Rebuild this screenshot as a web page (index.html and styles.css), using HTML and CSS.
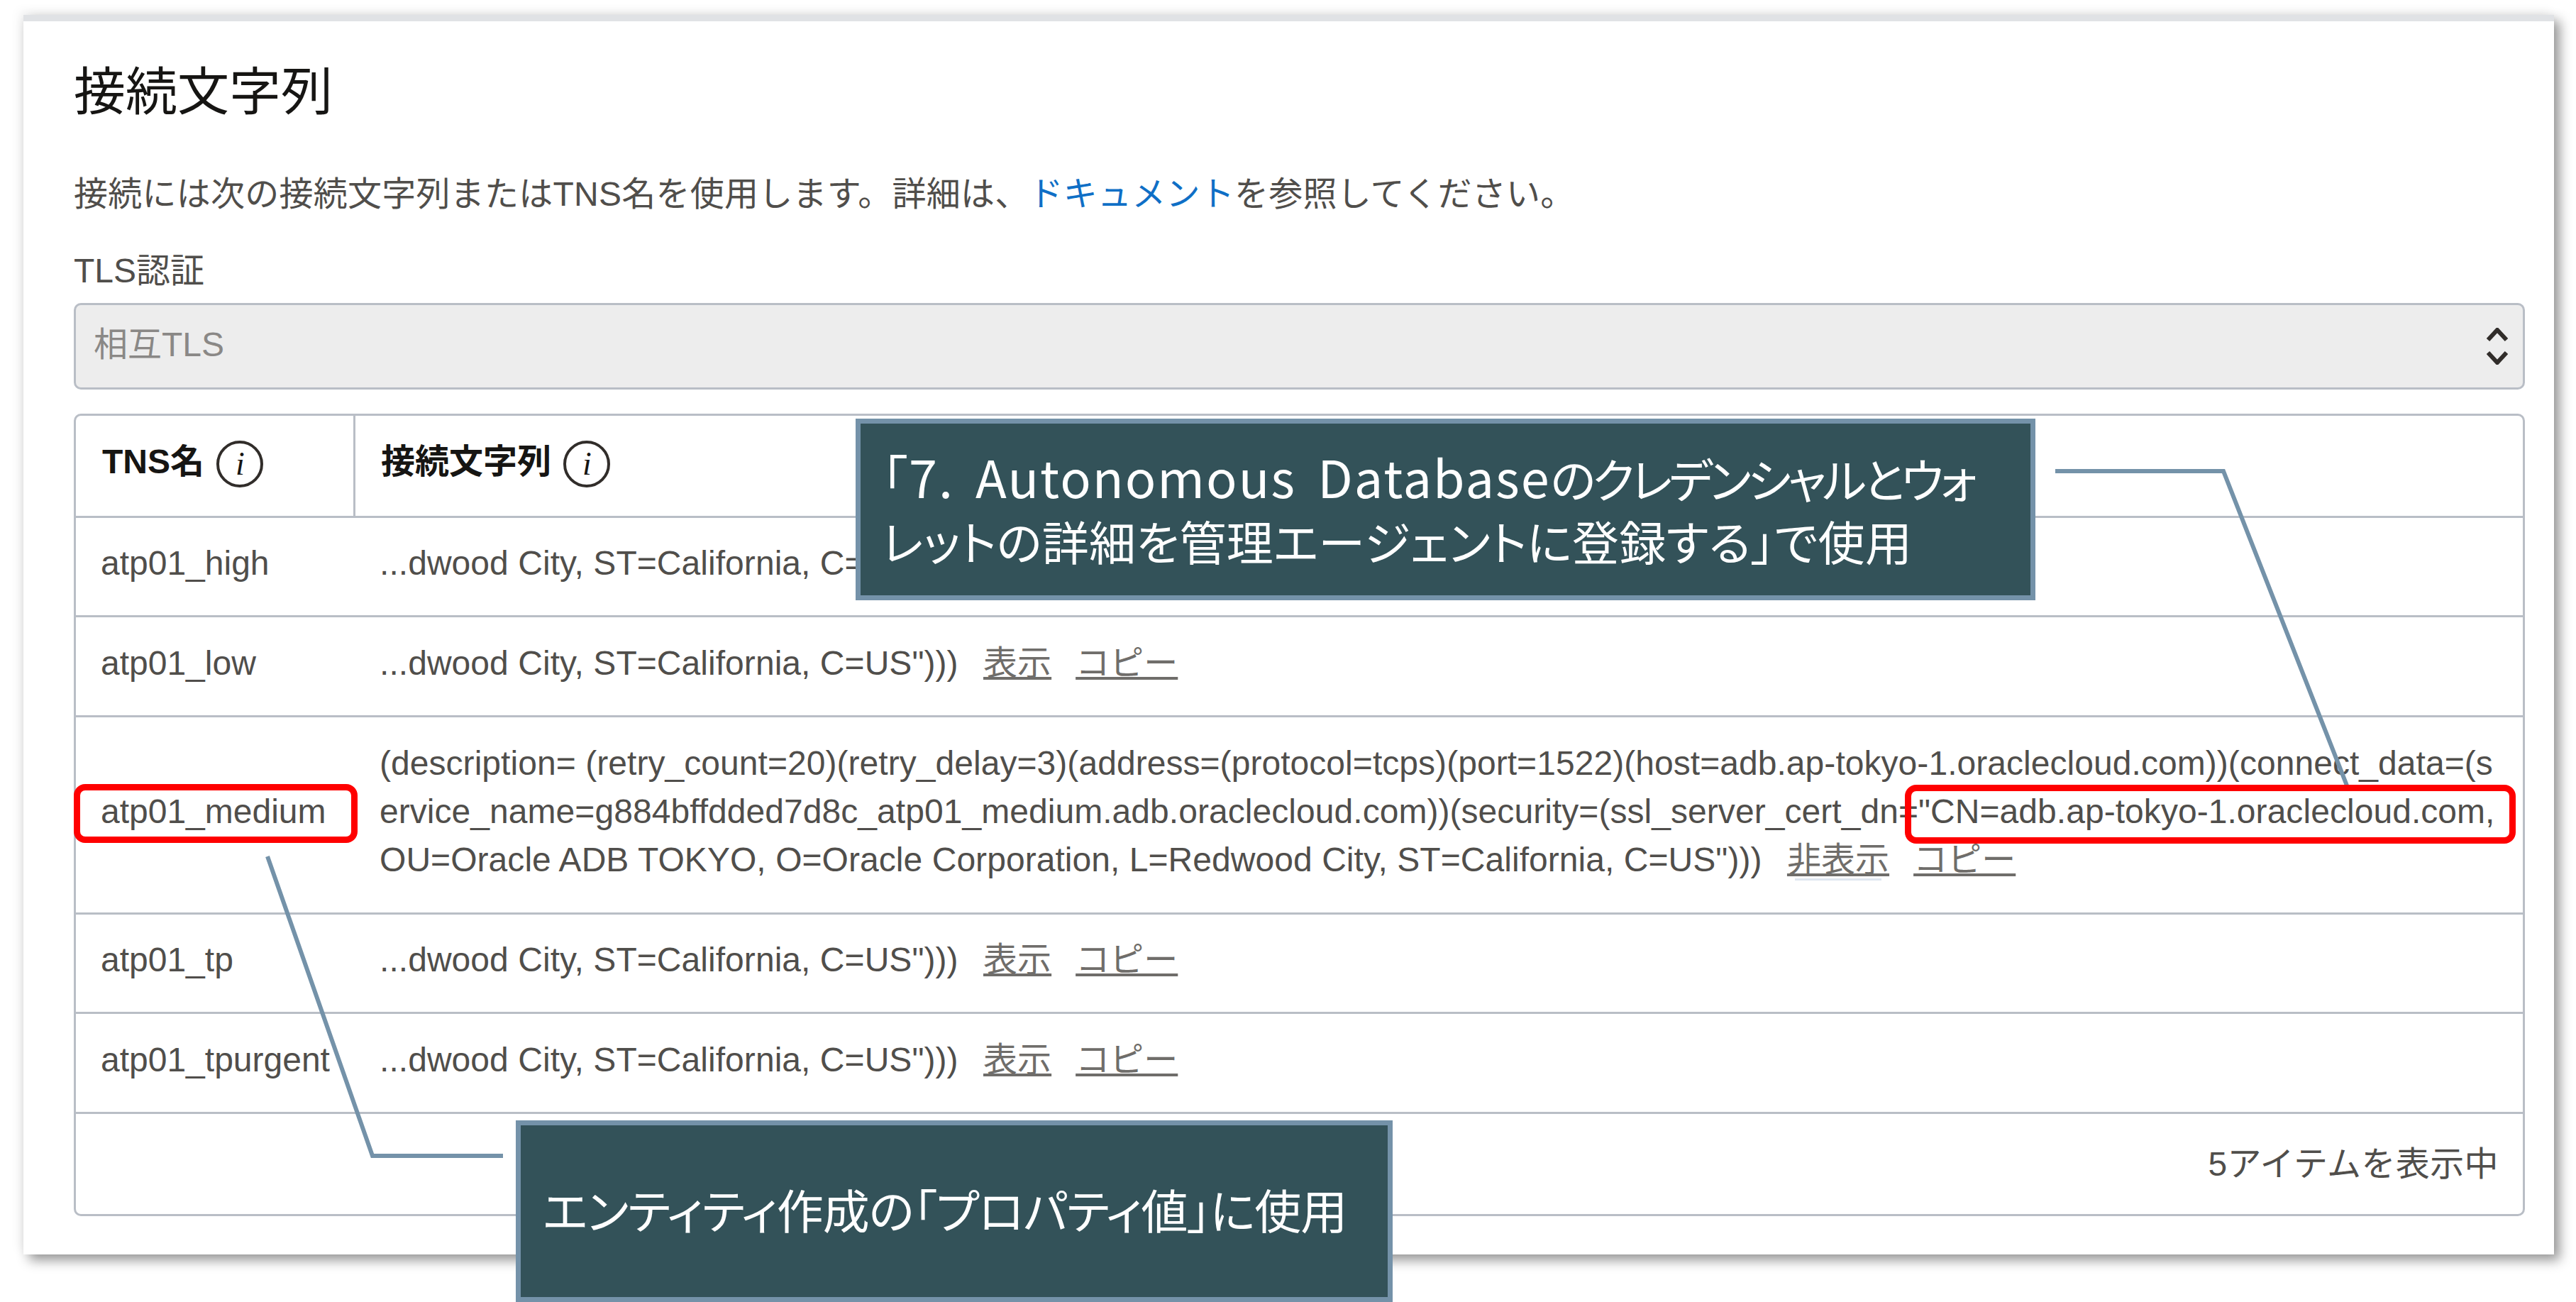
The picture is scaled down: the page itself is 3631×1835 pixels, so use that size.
FILE: index.html
```html
<!DOCTYPE html>
<html lang="ja">
<head>
    <meta charset="UTF-8">
    <title>接続文字列</title>
    <link rel="stylesheet" href="styles.css">
</head>
<body>

    <div class="page">
        <div class="card">
            <h2>接続文字列</h2>
            <p class="desc">接続には次の接続文字列またはTNS名を使用します。詳細は、<a class="doc-link">ドキュメント</a>を参照してください。</p>
            <div class="field-label">TLS認証</div>
            <div class="select">
                <span class="select-value">相互TLS</span>
                <svg class="chevrons" width="30" height="52" viewBox="0 0 30 52">
                    <path d="M2 17 L15 3 L28 17"/>
                    <path d="M2 35 L15 49 L28 35"/>
                </svg>
            </div>

            <div class="tns-table">
                <table>
                    <tr class="head-row">
                        <th class="col-name">TNS名 <span class="info"><i>i</i></span></th>
                        <th class="col-conn">接続文字列 <span class="info"><i>i</i></span></th>
                    </tr>
                    <tr class="row-a">
                        <td>atp01_high</td>
                        <td class="conn">...dwood City, ST=California, C=US"))) <a class="act">表示</a><a class="act">コピー</a></td>
                    </tr>
                    <tr class="row-b">
                        <td>atp01_low</td>
                        <td class="conn">...dwood City, ST=California, C=US"))) <a class="act">表示</a><a class="act">コピー</a></td>
                    </tr>
                    <tr class="row-open">
                        <td>atp01_medium</td>
                        <td class="conn">(description= (retry_count=20)(retry_delay=3)(address=(protocol=tcps)(port=1522)(host=adb.ap-tokyo-1.oraclecloud.com))(connect_data=(service_name=g884bffdded7d8c_atp01_medium.adb.oraclecloud.com))(security=(ssl_server_cert_dn="CN=adb.ap-tokyo-1.oraclecloud.com, OU=Oracle ADB TOKYO, O=Oracle Corporation, L=Redwood City, ST=California, C=US"))) <a class="act act-focus">非表示</a><a class="act">コピー</a></td>
                    </tr>
                    <tr class="row-a">
                        <td>atp01_tp</td>
                        <td class="conn">...dwood City, ST=California, C=US"))) <a class="act">表示</a><a class="act">コピー</a></td>
                    </tr>
                    <tr class="row-b">
                        <td>atp01_tpurgent</td>
                        <td class="conn">...dwood City, ST=California, C=US"))) <a class="act">表示</a><a class="act">コピー</a></td>
                    </tr>
                </table>
                <div class="table-foot">5アイテムを表示中</div>
            </div>
        </div>

        <!-- annotations drawn over the screenshot -->
        <svg class="leaders" width="3631" height="1835" viewBox="0 0 3631 1835">
            <polyline points="2897,664 3134,664 3308,1107"/>
            <polyline points="377,1207 525,1629 709,1629"/>
        </svg>
        <div class="red-box red-name"></div>
        <div class="red-box red-cn"></div>
        <div class="callout callout-top">
            <div><span class="latin">「7. Autonomous Database</span><span class="kana">のクレデンシャルとウォ</span></div>
            <div class="line-2">レットの詳細を管理エージェントに登録する」で使用</div>
        </div>
        <div class="callout callout-bottom">エンティティ作成の「プロパティ値」に使用</div>
    </div>

</body>
</html>
```

FILE: styles.css
```css
html, body {
    margin: 0;
    padding: 0;
    background: #fff;
}
body {
    font-family: "Liberation Sans", "Noto Sans CJK JP", sans-serif;
    font-size: 48px;
    line-height: 68px;
    color: #504e4b;
}
.page {
    position: relative;
    width: 3631px;
    height: 1835px;
    overflow: hidden;
    padding-top: 21px;
    box-sizing: border-box;
}
.card {
    margin-left: 33px;
    width: 3567px;
    box-sizing: border-box;
    height: 1747px;
    padding: 60px 41px 0 71px;
    background: #fff;
    border-top: 9px solid #e0e2e5;
    box-shadow: 8px 8px 16px rgba(0, 0, 0, 0.42), -6px -6px 14px rgba(0, 0, 0, 0.05);
}
h2 {
    margin: 0 0 67px;
    font-size: 73px;
    line-height: 80px;
    font-weight: 400;
    color: #161513;
}
.desc {
    margin: 0 0 43px;
    padding-top: 3px;
    height: 65px;
    letter-spacing: 0.25px;
}
.doc-link { color: #0f6fc6; }
.field-label { margin-bottom: 11px; }
.select {
    display: flex;
    justify-content: space-between;
    align-items: center;
    height: 122px;
    box-sizing: border-box;
    padding: 0 21px 0 25px;
    background: #ededed;
    border: 3px solid #b9bec6;
    border-radius: 10px;
    color: #8a8886;
}
.select-value { margin-bottom: 4px; }
.chevrons path {
    fill: none;
    stroke: #312d2a;
    stroke-width: 6;
}

.tns-table {
    margin-top: 34px;
    border: 3px solid #b9bec6;
    border-radius: 10px;
}
table {
    width: 100%;
    table-layout: fixed;
    border-collapse: separate;
    border-spacing: 0;
}
th, td {
    box-sizing: border-box;
    padding: 0 0 9px;
    border-bottom: 3px solid #b9bec6;
    text-align: left;
    font-weight: 400;
    vertical-align: middle;
}
th {
    font-weight: 700;
    color: #161513;
}
.head-row th { height: 144px; }
.col-name {
    width: 394px;
    padding-left: 37px;
    border-right: 3px solid #b9bec6;
}
.col-conn { padding-left: 36px; }
.row-a td { height: 140px; }
.row-b td { height: 141px; }
.row-open td { height: 278px; }
td:first-child { padding-left: 35px; }
.conn {
    padding-left: 34px;
    padding-right: 28px;
    letter-spacing: 0.05px;
    word-break: break-all;
}
.info {
    display: inline-flex;
    justify-content: center;
    align-items: center;
    width: 66px;
    height: 66px;
    margin-left: 4px;
    box-sizing: border-box;
    border: 4px solid #312d2a;
    border-radius: 50%;
    vertical-align: middle;
    font-family: "Liberation Serif", serif;
    font-size: 46px;
    font-weight: 400;
    line-height: 1;
}
.act {
    margin-left: 22px;
    margin-right: 12px;
    color: #6f6d6a;
    text-decoration: underline;
}
.act-focus { box-shadow: 0 14px 0 -11px #dfe6f0; }
.table-foot {
    height: 141px;
    display: flex;
    justify-content: flex-end;
    align-items: center;
    padding-right: 34px;
    letter-spacing: 0.4px;
}

.leaders {
    position: absolute;
    left: 0;
    top: 0;
}
.leaders polyline {
    fill: none;
    stroke: #7492a9;
    stroke-width: 6;
}
.red-box {
    position: absolute;
    box-sizing: border-box;
    border: 9px solid #f00;
    border-radius: 16px;
}
.red-name {
    left: 104px;
    top: 1105px;
    width: 400px;
    height: 83px;
}
.red-cn {
    left: 2685px;
    top: 1106px;
    width: 861px;
    height: 83px;
}
.callout {
    position: absolute;
    box-sizing: border-box;
    display: flex;
    flex-direction: column;
    justify-content: center;
    background: #335259;
    border: 7px solid #7492a9;
    color: #fff;
    font-family: "Noto Sans CJK JP", sans-serif;
    font-size: 66px;
    line-height: 88px;
    font-feature-settings: "palt";
    white-space: nowrap;
}
.callout-top {
    left: 1206px;
    top: 590px;
    width: 1663px;
    height: 256px;
    padding: 0 0 4px 30px;
}
.latin {
    font-size: 72px;
    letter-spacing: 2px;
    word-spacing: 12px;
}
.kana { letter-spacing: -4.7px; }
.line-2 { letter-spacing: 0.3px; }
.callout-bottom {
    left: 727px;
    top: 1579px;
    width: 1236px;
    height: 256px;
    padding: 0 0 8px 31px;
    letter-spacing: -1px;
}
```
